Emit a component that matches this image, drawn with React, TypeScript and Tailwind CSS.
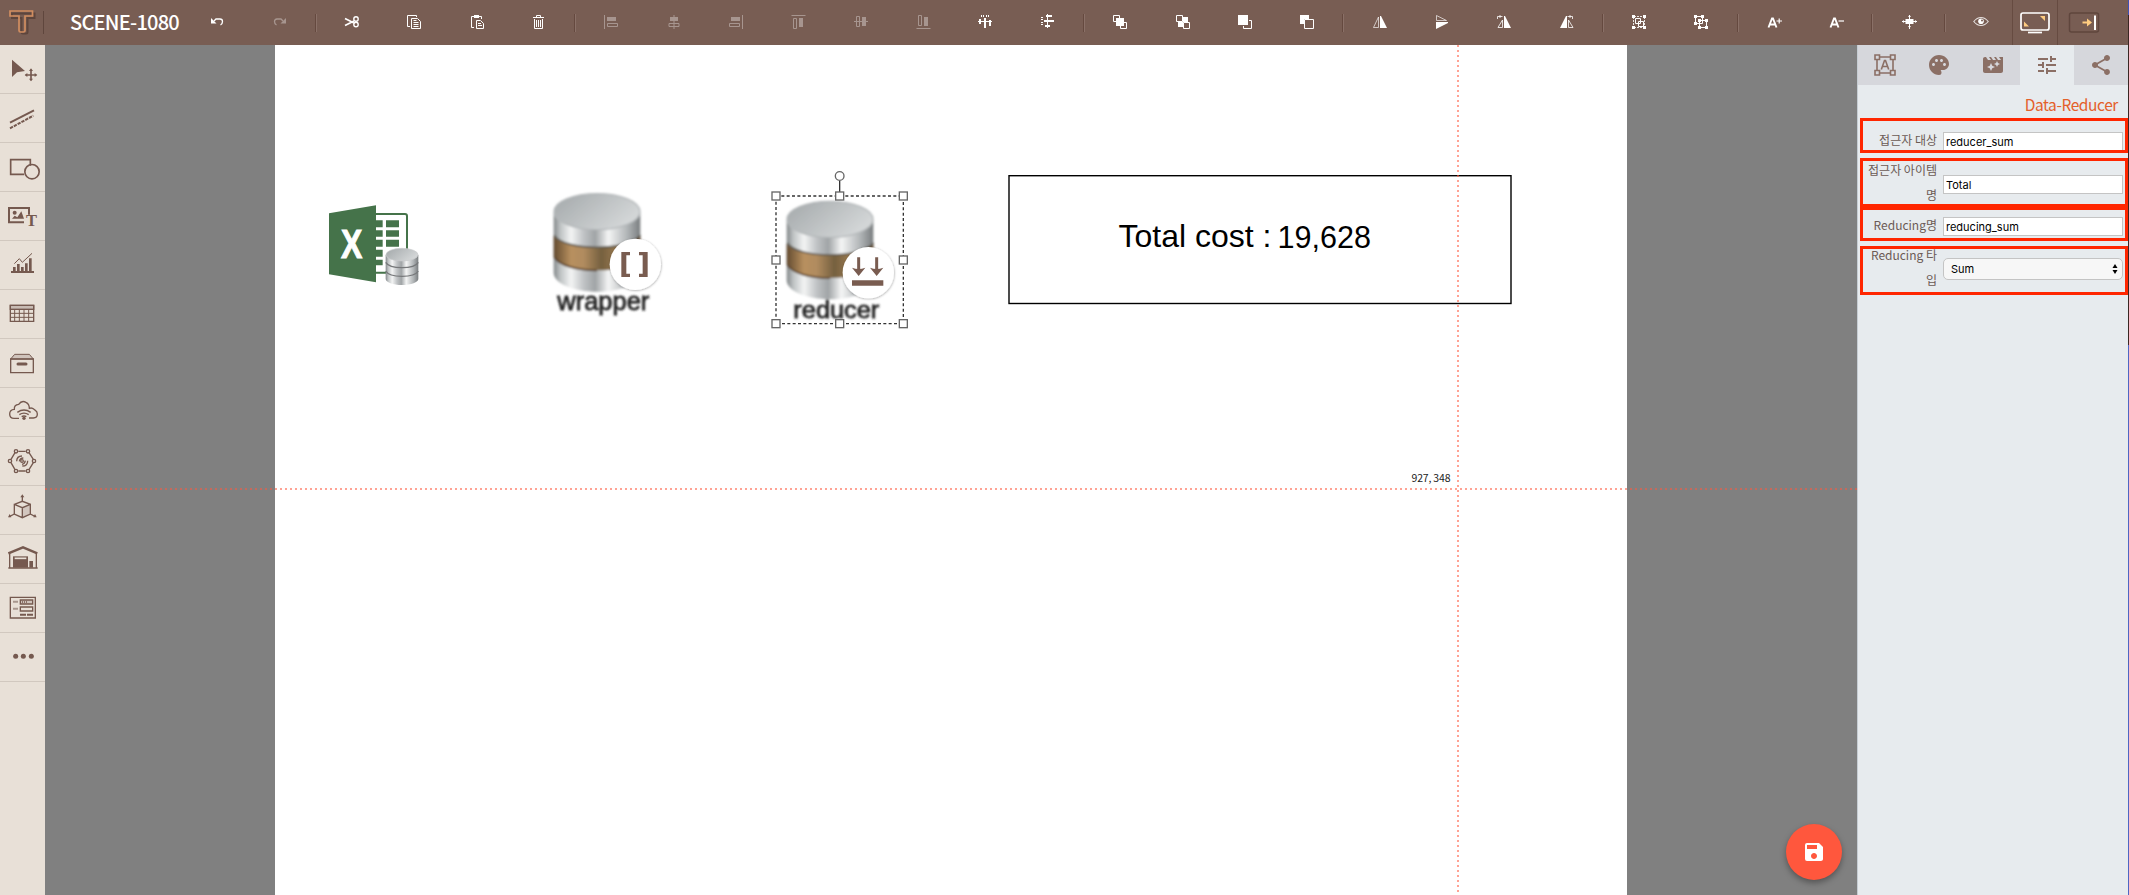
import React from "react";
import { MdMovieFilter, MdPalette, MdSave, MdShare, MdTune } from "react-icons/md";

type Kids = { children: React.ReactNode };

function Tool({ children, dim = false }: Kids & { dim?: boolean }) {
  return (
    <button className={"flex min-w-0 flex-1 items-center justify-center pb-px text-white " + (dim ? "opacity-35" : "")}>
      <svg width="16" height="16" viewBox="0 0 16 16" fill="none" stroke="currentColor" strokeWidth="1">
        {children}
      </svg>
    </button>
  );
}

function Sep() {
  return (
    <div className="flex w-[10px] shrink-0 items-center justify-center">
      <div className="h-[18px] w-[2px] border-l border-[#65493f] bg-[#8a7067]" />
    </div>
  );
}

function Solid({ d }: { d: string }) {
  return <path d={d} fill="currentColor" stroke="none" />;
}

function Toolbar() {
  return (
    <header className="flex h-[45px] shrink-0 bg-[#785d53] text-white">
      <div className="flex w-[43px] items-center justify-center pb-px">
        <svg width="28" height="28" viewBox="0 0 28 28" fill="none">
          <path d="M3 4.5h22.5v4.5h-7v14q0 1.5-1.500 1.500h-3q-1.500 0-1.500-1.500v-14H3z" stroke="#5d453c" strokeWidth="2" transform="translate(1 1)" />
          <path d="M2 3h22.500v5h-7.500v14.500q0 1.500-1.500 1.500h-3q-1.500 0-1.500-1.500V8H2z" stroke="#d18d60" strokeWidth="1.700" />
        </svg>
      </div>
      <div className="flex w-[143px] items-center">
        <div className="mr-[26px] h-[23px] w-px bg-[#5f463d]" />
        <h1 className="whitespace-nowrap pb-px font-['Noto_Sans_CJK_KR',sans-serif] text-[20px] font-medium leading-[42px] tracking-[-0.75px]">SCENE-1080</h1>
      </div>
      <div className="flex min-w-0 flex-1">
        <Tool>
          <path d="M5 7l2-2h4q2.500 0 2.500 2.500T11.500 11" strokeWidth="1.300" />
          <Solid d="M2 4v5.500h5.500z" />
        </Tool>
        <Tool dim>
          <path d="M11 7L9 5H5Q2.500 5 2.500 7.500T4.500 11" strokeWidth="1.300" />
          <Solid d="M14 4v5.500H8.500z" />
        </Tool>
        <Sep />
        <Tool>
          <path d="M1 4.500l9 4.500M1 11.500L10 7" strokeWidth="1.800" />
          <circle cx="12" cy="5" r="2.200" strokeWidth="1.400" />
          <circle cx="12" cy="10.500" r="2.200" strokeWidth="1.400" />
        </Tool>
        <Tool>
          <path d="M4 12.500H1.500v-11h9V3M5.500 4.500h6l3 3v7h-9zM7.500 8.500h5M7.500 10.500h5M7.500 12.500h5M7.500 6.500h3" />
        </Tool>
        <Tool>
          <path d="M5 13.500H2.500v-11H12.500V5M7.500 6.500h4l3 3v5h-7zM9 9.500h3M9 11.500h4" />
          <Solid d="M5 1h5v3H5z" />
        </Tool>
        <Tool>
          <path d="M2 3.500h11M5.500 3V1.500h4V3M3.500 5v9.500h8V5M5.500 6v7M7.500 6v7M9.500 6v7" />
        </Tool>
        <Sep />
        <Tool dim>
          <path d="M1.500 1v14M4.500 9.500h10v3h-10z" />
          <Solid d="M4 3h9v4H4z" />
        </Tool>
        <Tool dim>
          <path d="M8 1v14M3 9.500h10v3H3z" />
          <Solid d="M4 3h8v4H4z" />
        </Tool>
        <Tool dim>
          <path d="M14.500 1v14M1.500 9.500h10v3h-10z" />
          <Solid d="M3 3h9v4H3z" />
        </Tool>
        <Tool dim>
          <path d="M1.500 1.500h14M3.500 4.500h3v10h-3z" />
          <Solid d="M9 4h4v9H9z" />
        </Tool>
        <Tool dim>
          <path d="M1 7.500h14M3.500 2.500h3v10h-3z" />
          <Solid d="M9 3h4v9H9z" />
        </Tool>
        <Tool dim>
          <path d="M1.500 14.500h14M3.500 1.500h3v10h-3z" />
          <Solid d="M9 3h4v9H9z" />
        </Tool>
        <Tool>
          <path d="M1 7.500h14M4.500 1v2M6.500 1v2M9.500 1v2M11.500 1v2" />
          <Solid d="M2 5h2v5H2zM7 4h2v10H7zM12 6h2v6h-2z" />
        </Tool>
        <Tool>
          <path d="M7.500 0v14M1 3.500h2M1 5.500h2M1 8.500h2M1 10.500h2" />
          <Solid d="M6 1h6v2H6zM4 6h10v2H4zM5 11h5v2H5z" />
        </Tool>
        <Sep />
        <Tool>
          <path d="M5 7.500H1.500v-6h6V5M11 8.500h3.500v6h-6V11" />
          <Solid d="M4 4h8v8H4z" />
        </Tool>
        <Tool>
          <path d="M1.500 1.500h6v6h-6z M8.500 8.500h6v6h-6z" />
          <Solid d="M8 3h5v5H8zM3 8h5v5H3z" />
        </Tool>
        <Tool>
          <path d="M12 6.500h2.500v8h-8V12" />
          <Solid d="M1 1h10v10H1z" />
        </Tool>
        <Tool>
          <Solid d="M1 1h9v4H5v5H1z" />
          <path d="M5.500 5.500h9v9h-9z" />
        </Tool>
        <Sep />
        <Tool>
          <path d="M6.500 3v10.500H1.500z" opacity=".65" />
          <Solid d="M8 2h1l6 12H8z" />
        </Tool>
        <Tool>
          <path d="M2.500 1.500v5h10z" opacity=".65" />
          <Solid d="M2 8h12v1L2 15z" />
        </Tool>
        <Tool>
          <path d="M6.500 6v7.500H2zM6.500 2.500h-5V5M4 1v3" opacity=".8" />
          <Solid d="M8 2h1l6 12H8z" />
        </Tool>
        <Tool>
          <path d="M9.500 6v7.500H14zM8.500 2.500h5V5M11 1v3" opacity=".8" />
          <Solid d="M8 2H7L1 14h7z" />
        </Tool>
        <Sep />
        <Tool>
          <path d="M3 2.500h10M2.500 3v10M13.500 3v10M3 13.500h10" strokeDasharray="2 1" opacity=".85" />
          <path d="M4.500 4.500h5v5h-5zM7.500 7.500h5v5h-5z" />
          <Solid d="M1 1h3v3H1zM12 1h3v3h-3zM1 12h3v3H1zM12 12h3v3h-3z" />
        </Tool>
        <Tool>
          <path d="M2.500 2.500h7v7h-7zM6.500 6.500h7v7h-7z" />
          <Solid d="M1 1h3v3H1zM8 1h3v3H8zM1 8h3v3H1zM5 5h3v3H5zM12 5h3v3h-3zM5 12h3v3H5zM12 12h3v3h-3z" />
        </Tool>
        <Sep />
        <Tool>
          <path d="M2.500 13.500L6 4.500h1l3.500 9M4 10.500h5" strokeWidth="1.900" />
          <path d="M10.500 7h5.500M13.200 4.500v5" strokeWidth="1.200" />
        </Tool>
        <Tool>
          <path d="M2.500 13.500L6 4.500h1l3.500 9M4 10.500h5" strokeWidth="1.900" />
          <path d="M10.500 7h5.500" strokeWidth="1.200" />
        </Tool>
        <Sep />
        <Tool>
          <path d="M8.500 1v14M1 7.500h15" />
          <Solid d="M4.500 5h8v5h-8zM7 3h3L8.500 1zM7 12h3l-1.500 2zM3 6v3L1 7.500zM14 6v3l2-1.500z" />
        </Tool>
        <Sep />
        <Tool>
          <path d="M.8 7.500Q4 3.500 8 3.500t7.200 4Q12 11.500 8 11.500T.8 7.500z" opacity=".8" strokeWidth="1.200" />
          <circle cx="8" cy="7.300" r="2.800" fill="white" stroke="none" />
          <circle cx="9" cy="6.400" r="1" fill="#785d53" stroke="none" />
        </Tool>
      </div>
      <div className="flex w-[46px] items-center justify-center border-x border-[#664b41]">
        <svg width="32" height="24" viewBox="0 0 32 24" fill="none">
          <rect x="2" y="2" width="28" height="17" rx="2" stroke="#ffffff" strokeWidth="1.700" />
          <path d="M9 21.500h14" stroke="#ffffff" strokeWidth="1.700" />
          <path d="M21 5h5v5zM5 10.500v5h5z" fill="#ffcc80" />
        </svg>
      </div>
      <div className="flex w-[70px] items-center pl-[10px]">
        <svg width="32" height="24" viewBox="0 0 32 24" fill="none">
          <rect x="1.500" y="2" width="29" height="19" rx="2" stroke="#5f463d" strokeWidth="1.500" />
          <path d="M14.500 11.500h6" stroke="#ffcc80" strokeWidth="2" />
          <path d="M19 7.500v8l5-4z" fill="#ffcc80" />
          <path d="M27 4.500v14.500" stroke="#ffffff" strokeWidth="2" />
        </svg>
      </div>
      <div className="w-px bg-[linear-gradient(#3f51b5_0_15px,#3a2723_15px)]" />
    </header>
  );
}

function Side({ children }: Kids) {
  return (
    <button className="block h-[49px] w-[45px] border-b border-[#d1c8bf]">
      <svg width="45" height="48" viewBox="0 0 135 144" fill="none" stroke="#75594f" strokeWidth="4">
        {children}
      </svg>
    </button>
  );
}

function Sidebar() {
  return (
    <nav className="w-[45px] shrink-0 bg-[#e8e0d7]">
      <Side>
        <path d="M36 44v52l15-14 24-4z" fill="#75594f" stroke="none" />
        <path d="M93 74v32M77 90h32" strokeWidth="5" />
        <path d="M93 70l6 8H87zM93 109l6-8H87zM74 90l8-6v12zM112 90l-8-6v12z" fill="#75594f" stroke="none" />
      </Side>
      <Side>
        <path d="M30 86l72-37" strokeWidth="6" />
        <path d="M30 103l70-38" strokeWidth="6" strokeDasharray="10 3" />
      </Side>
      <Side>
        <path d="M91 68V50H32v44h40" strokeWidth="5" />
        <circle cx="96" cy="86" r="21.500" strokeWidth="5" />
      </Side>
      <Side>
        <path d="M72 91H27V48h60v20" strokeWidth="6" />
        <circle cx="44" cy="62" r="6" fill="#75594f" stroke="none" />
        <path d="M36 80l8-9 8 5 12-18 8 22z" fill="#75594f" stroke="none" />
        <text x="78" y="101" textLength="33" lengthAdjust="spacingAndGlyphs" className="font-['Liberation_Serif',serif] text-[50px] font-bold" fill="#75594f" stroke="none">T</text>
      </Side>
      <Side>
        <path d="M33 93h69" strokeWidth="6" />
        <path d="M43 90V78M55 90V69M67 90V78M79 90V67M91 90V52" strokeWidth="8" />
        <path d="M43 68l15-15 9 11 29-27" strokeWidth="3" />
      </Side>
      <Side>
        <path d="M31 46h70v12H31z" fill="#c8bbb3" />
        <path d="M31 46h70v48H31z" />
        <path d="M32 58h69M32 70h69M32 82h69M44 58v36M58 58v36M72 58v36M86 58v36" strokeWidth="3" />
      </Side>
      <Side>
        <path d="M32 60l12-14h44l12 14z" fill="#cfc3bb" strokeWidth="3" />
        <path d="M32 60h68v41H32z" />
        <path d="M54 75h24" strokeWidth="9" strokeLinecap="round" />
      </Side>
      <Side>
        <path d="M57 91H42q-13 0-13-13t14-14q-1-14 13-15q9-13 22-6q10 5 10 18q8-3 14 3l4 3q6 3 6 11q0 12-12 12H87" />
        <path d="M52 73q20-14 40 0M58 80q14-9 28 0M65 86q7-4 14 0" strokeWidth="4" />
        <circle cx="72" cy="91" r="5" fill="#75594f" stroke="none" />
      </Side>
      <Side>
        <path d="M55 43h22M87 47l13 20M100 77L87 98M77 102H55M45 98L33 77M33 67l12-20" strokeWidth="4" />
        <circle cx="48" cy="43" r="5" />
        <circle cx="84" cy="43" r="5" />
        <circle cx="102" cy="72" r="5" />
        <circle cx="84" cy="102" r="5" />
        <circle cx="48" cy="102" r="5" />
        <circle cx="30" cy="72" r="5" />
        <circle cx="66" cy="72" r="4" />
        <path d="M50 73q0-16 16-16M58 73q2-10 12-10M83 71q0 16-16 16M76 71q-2 10-10 11" strokeWidth="4" />
      </Side>
      <Side>
        <path d="M67 64l24-14v30L67 94z" fill="#d2c6be" stroke="none" transform="translate(0 2)" />
        <path d="M43 55l24-9 24 9v29L67 95 43 84zM43 55l24 10 24-10M67 65v30" />
        <path d="M67 45V30M43 84L28 92M91 84l15 8" />
        <path d="M67 25l6 9H61zM24 94l5-10 5 10zM110 94l-5-10-5 10z" fill="#75594f" stroke="none" />
      </Side>
      <Side>
        <path d="M25 55l44-18 43 18" strokeWidth="7" />
        <path d="M29 54v45h80V54M25 99h88" />
        <path d="M39 64h45v34H39z" fill="#75594f" stroke="none" />
        <path d="M44 70h35" stroke="#e8e0d7" strokeWidth="5" />
        <path d="M88 78h11v20H88z" fill="#75594f" stroke="none" />
      </Side>
      <Side>
        <path d="M31 40h75v62H31z" />
        <path d="M39 53h15M39 74h15" stroke="#a8978e" strokeWidth="6" />
        <path d="M61 48h37v12H61z" fill="#cfc3bb" />
        <path d="M61 69h37v12H61z" />
        <path d="M66 54h16" strokeDasharray="3 3" />
        <path d="M60 92h18M81 92h18" strokeWidth="6" />
      </Side>
      <Side>
        <circle cx="47" cy="70" r="7.500" fill="#75594f" stroke="none" />
        <circle cx="70" cy="70" r="7.500" fill="#75594f" stroke="none" />
        <circle cx="94" cy="70" r="7.500" fill="#75594f" stroke="none" />
      </Side>
    </nav>
  );
}

function Cylinder() {
  return (
    <g>
      <path d="M731 98v180c0 32 60 57 130 57s130-25 130-57V98z" fill="url(#silver)" />
      <path d="M731 168v62c10 26 65 41 130 41s120-15 130-41v-62c-15 20-70 33-130 33s-115-13-130-33z" fill="url(#bronze)" />
      <path d="M733 166c15 24 69 36 128 36s115-14 130-36" fill="none" stroke="#5f5a50" strokeWidth="5" />
      <path d="M733 231c15 26 69 40 128 40" fill="none" stroke="#5d452d" strokeWidth="5" />
      <ellipse cx="861" cy="95" rx="129" ry="54" fill="url(#lid)" stroke="#b4b8ba" strokeWidth="4" />
    </g>
  );
}

function Scene() {
  return (
    <svg className="block" width="1352" height="850" viewBox="275 45 1352 850">
      <defs>
        <linearGradient id="silver">
          <stop offset="0" stopColor="#84898b" />
          <stop offset=".08" stopColor="#c0c4c5" />
          <stop offset=".2" stopColor="#f3f4f4" />
          <stop offset=".35" stopColor="#bfc2c4" />
          <stop offset=".48" stopColor="#a0a4a6" />
          <stop offset=".63" stopColor="#f4f5f5" />
          <stop offset=".85" stopColor="#b0b4b6" />
          <stop offset="1" stopColor="#797d7f" />
        </linearGradient>
        <linearGradient id="bronze">
          <stop offset="0" stopColor="#634b30" />
          <stop offset=".2" stopColor="#b8905f" />
          <stop offset=".35" stopColor="#b08b5e" />
          <stop offset=".55" stopColor="#75603f" />
          <stop offset=".8" stopColor="#a88355" />
          <stop offset="1" stopColor="#634b30" />
        </linearGradient>
        <linearGradient id="lid" x1="0" y1="0" x2="1" y2=".5">
          <stop offset="0" stopColor="#a3a8aa" />
          <stop offset="1" stopColor="#d3d6d7" />
        </linearGradient>
        <filter id="bitmap" x="-10%" y="-10%" width="120%" height="120%">
          <feGaussianBlur stdDeviation="2.600" />
        </filter>
        <filter id="badge" x="-20%" y="-20%" width="140%" height="140%">
          <feDropShadow dx="1" dy="2" stdDeviation="2.500" floodOpacity=".35" />
        </filter>
      </defs>

      <g transform="translate(310 180) scale(.33333)">
        <rect x="190" y="102" width="101" height="176" rx="6" fill="white" stroke="#45734a" strokeWidth="6" />
        <path d="M57 100L198 76v231L57 283z" fill="#45734a" />
        <path d="M198 121h20v21h-20zM198 151h20v19h-20zM198 179h20v21h-20zM198 209h20v21h-20zM198 239h20v17h-20zM228 121h39v21h-39zM228 151h39v19h-39zM228 179h39v21h-39z" fill="#45734a" />
        <text x="93" y="234" textLength="64" lengthAdjust="spacingAndGlyphs" className="font-['Liberation_Sans',sans-serif] text-[122px] font-bold" fill="white" stroke="white" strokeWidth="3">X</text>
        <path d="M227 225v72c0 10 22 18 49 18s49-8 49-18v-72z" fill="url(#silver)" />
        <path d="M227 247c6 10 26 16 49 16s43-6 49-16M227 273c6 10 26 16 49 16s43-6 49-16" fill="none" stroke="#77797b" strokeWidth="4" />
        <ellipse cx="276" cy="224" rx="48" ry="19" fill="url(#lid)" stroke="#c8cacc" strokeWidth="2" />
      </g>

      <g transform="translate(310 180) scale(.33333)">
        <g filter="url(#bitmap)">
          <Cylinder />
          <text x="742" y="391" textLength="276" lengthAdjust="spacingAndGlyphs" className="font-['Liberation_Sans',sans-serif] text-[76px]" fill="#262626" stroke="#262626" strokeWidth="2.500">wrapper</text>
        </g>
        <circle cx="976" cy="253" r="77" fill="white" filter="url(#badge)" />
        <path d="M960 216h-26v75h26v-10h-11v-55h11zM987 216h26v75h-26v-10h11v-55h-11z" fill="#795c50" />
      </g>

      <g transform="translate(750 160) scale(.33333)">
        <g filter="url(#bitmap)">
          <g transform="translate(-621 83)">
            <Cylinder />
          </g>
          <text x="130" y="474" textLength="258" lengthAdjust="spacingAndGlyphs" className="font-['Liberation_Sans',sans-serif] text-[72px]" fill="#262626" stroke="#262626" strokeWidth="2.500">reducer</text>
        </g>
        <circle cx="355" cy="338" r="77" fill="white" filter="url(#badge)" />
        <path d="M326 292v36M380 292v36" stroke="#795c50" strokeWidth="9" />
        <path d="M306 323q20 8 40 0l-20 25zM360 323q20 8 40 0l-20 25z" fill="#795c50" />
        <path d="M306 369h94" stroke="#795c50" strokeWidth="16" />
        <g fill="none" stroke="#333333" strokeWidth="4">
          <rect x="78" y="108" width="382" height="383" strokeDasharray="9 7" />
          <path d="M269 62v34" />
          <g fill="white" stroke="#666666">
            <circle cx="269" cy="48" r="13" />
            {[78, 269, 460].map((x) =>
              [108, 300, 491].map((y) =>
                x === 269 && y === 300 ? null : <rect key={x + "-" + y} x={x - 12} y={y - 12} width="24" height="24" />
              )
            )}
          </g>
        </g>
      </g>

      <rect x="1009" y="175.700" width="502" height="127.800" fill="none" stroke="black" strokeWidth="1.400" />
      <text x="1118.500" y="247" className="font-['Liberation_Sans',sans-serif] text-[32px]">Total cost :</text>
      <text x="1277.500" y="247.700" textLength="93.500" lengthAdjust="spacingAndGlyphs" className="font-['Liberation_Sans',sans-serif] text-[31px]">19,628</text>
      <text x="1411.500" y="482" textLength="39" className="font-['Noto_Sans_CJK_KR',sans-serif] text-[10.5px]" fill="#222222">927, 348</text>
    </svg>
  );
}

const frame = "ml-[2px] flex items-start overflow-hidden border-[3px] border-[#ff2600] ";
const label = "w-[74px] shrink-0 whitespace-nowrap text-right font-['Noto_Sans_CJK_KR',sans-serif] text-[12px] leading-[25px] text-[#6b5a55] ";
const field = "ml-[6px] h-[19px] w-[180px] shrink-0 border border-[#c4c4c4] bg-white pl-[2px] font-['Inter',sans-serif] text-[11px] leading-[18px] text-black outline-none ";

function Panel() {
  const tab = "flex h-[40px] w-[54px] items-center justify-center text-[#8b6f65] ";
  return (
    <aside className="w-[271px] shrink-0 border-l border-[#c5ccd2] bg-[#e7ebee]">
      <div className="flex bg-[#d6d7dc]">
        <div className={tab}>
          <svg width="22" height="22" viewBox="0 0 22 22" fill="none" stroke="currentColor" strokeWidth="1.600">
            <path d="M5.500 3h11M5.500 19h11M3 5.500v11M19 5.500v11M1 1h4.500v4.500H1zM16.500 1H21v4.500h-4.500zM1 16.500h4.500V21H1zM16.500 16.500H21V21h-4.500z" />
            <path d="M7.300 15.500L10.500 6.500h1l3.200 9M8.500 12.500h5" />
          </svg>
        </div>
        <div className={tab}><MdPalette size={24} /></div>
        <div className={tab}><MdMovieFilter size={24} /></div>
        <div className={tab + "bg-[#e7ebee]"}><MdTune size={24} /></div>
        <div className={tab}><MdShare size={24} /></div>
      </div>
      <h2 className="h-[33px] pr-[10px] pt-[7px] text-right font-['Noto_Sans_CJK_KR',sans-serif] text-[15.5px] leading-[24px] tracking-[-0.4px] text-[#e4602a]">Data-Reducer</h2>
      <div className={frame + "h-[35px]"}>
        <div className={label + "mt-[6px]"}>접근자 대상</div>
        <input className={field + "mt-[11px]"} defaultValue="reducer_sum" />
      </div>
      <div className={frame + "mt-[5px] h-[49px]"}>
        <div className={label + "-mt-[4px]"}>접근자 아이템<br />명</div>
        <input className={field + "mt-[14px]"} defaultValue="Total" />
      </div>
      <div className={frame + "h-[34px]"}>
        <div className={label + "mt-[2px]"}>Reducing명</div>
        <input className={field + "mt-[7px]"} defaultValue="reducing_sum" />
      </div>
      <div className={frame + "mt-[5px] h-[49px]"}>
        <div className={label + "-mt-[7px]"}>Reducing 타<br />입</div>
        <div className="ml-[6px] mt-[9px] flex h-[22px] w-[180px] shrink-0 items-center justify-between rounded-[5px] border border-[#c4c4c4] bg-[#f7f7f7] pl-[7px] pr-[4px] font-['Inter',sans-serif] text-[11px] text-black">
          <span>Sum</span>
          <svg width="6" height="10" viewBox="0 0 6 10">
            <path d="M3 0l2.500 4h-5zM3 10l2.500-4h-5z" />
          </svg>
        </div>
      </div>
    </aside>
  );
}

export default function App() {
  return (
    <div className="flex h-[895px] w-[2129px] flex-col overflow-hidden">
      <Toolbar />
      <div className="flex min-h-0 flex-1">
        <Sidebar />
        <main className="relative w-[1812px] shrink-0 bg-[#808080] pl-[230px]">
          <div className="h-full w-[1352px] bg-white">
            <Scene />
          </div>
          <div className="absolute left-0 top-[443px] h-[2px] w-full bg-[repeating-linear-gradient(90deg,#ff573d_0_2px,transparent_2px_5px)] opacity-55" />
          <div className="absolute left-[1412px] top-0 h-full w-[2px] bg-[repeating-linear-gradient(180deg,#ff573d_0_2px,transparent_2px_5px)] opacity-55" />
          <button className="absolute left-[1741px] top-[779px] flex size-[56px] items-center justify-center rounded-full bg-[#ff573d] text-white shadow-[0_3px_6px_rgba(0,0,0,0.35)]">
            <MdSave size={24} />
          </button>
        </main>
        <Panel />
        <div className="w-px bg-[linear-gradient(#3a2723_0_300px,#4f66c4_300px)]" />
      </div>
    </div>
  );
}
